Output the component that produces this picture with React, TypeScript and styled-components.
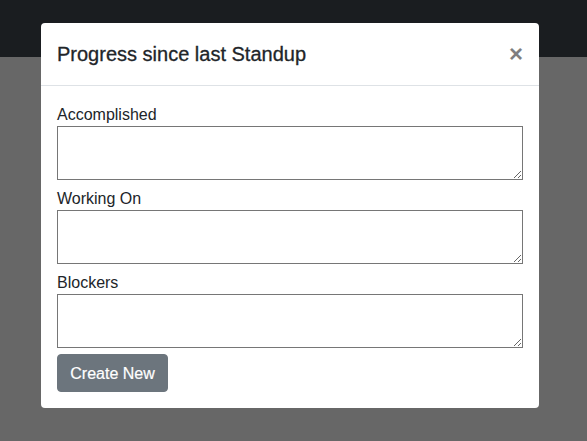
import React from 'react';
import styled, { createGlobalStyle } from 'styled-components';

const GlobalStyle = createGlobalStyle`
  html, body {
    margin: 0;
    padding: 0;
    height: 100%;
    overflow: hidden;
  }
  body {
    font-family: "Liberation Sans", Arial, sans-serif;
    color: #212529;
    background: #676767;
  }
`;

export default function App() {
  return (
    <Page>
      <GlobalStyle />
      <Navbar />
      <Backdrop />

      {/* MODAL */}
      <ModalLayer>
        <ModalContent>
          <ModalHeader>
            <ModalTitle>Progress since last Standup</ModalTitle>
            <CloseButton aria-label="Close">×</CloseButton>
          </ModalHeader>
          <ModalBody>
            <Field>
              <Label htmlFor="accomplished">Accomplished</Label>
              <TextArea id="accomplished" />
            </Field>
            <Field>
              <Label htmlFor="working">Working On</Label>
              <TextArea id="working" />
            </Field>
            <Field>
              <Label htmlFor="blockers">Blockers</Label>
              <TextArea id="blockers" />
            </Field>
            <Button>Create New</Button>
          </ModalBody>
        </ModalContent>
      </ModalLayer>
    </Page>
  );
}

const Page = styled.div`
  min-height: 100vh;
  display: flex;
  flex-direction: column;
`;

const Navbar = styled.div`
  height: 57px;
  background: #1a1d20;
`;

const Backdrop = styled.div`
  flex: 1;
  background: #676767;
`;

const ModalLayer = styled.div`
  position: fixed;
  inset: 0;
  padding: 23px 0 0 41px;
`;

const ModalContent = styled.div`
  width: 498px;
  background: #fff;
  border-radius: 4px;
  display: flex;
  flex-direction: column;
`;

const ModalHeader = styled.div`
  display: flex;
  align-items: center;
  justify-content: space-between;
  padding: 16px;
  border-bottom: 1px solid #dee2e6;
`;

const ModalTitle = styled.h5`
  margin: 0;
  font-size: 20px;
  line-height: 30px;
  font-weight: 500;
  color: #212529;
  -webkit-text-stroke: 0.3px #212529;
`;

const CloseButton = styled.button`
  border: 0;
  background: transparent;
  padding: 0;
  font-family: "Liberation Sans", Arial, sans-serif;
  font-size: 24px;
  font-weight: 700;
  line-height: 1;
  color: #000;
  opacity: 0.5;
  cursor: pointer;
`;

const ModalBody = styled.div`
  padding: 16px;
  display: flex;
  flex-direction: column;
  align-items: flex-start;
  gap: 6px;
`;

const Field = styled.div`
  width: 100%;
  display: flex;
  flex-direction: column;
`;

const Label = styled.label`
  font-size: 16px;
  line-height: 23px;
  padding-top: 1px;
  color: #212529;
`;

const TextArea = styled.textarea`
  box-sizing: border-box;
  width: 100%;
  height: 54px;
  margin: 0;
  padding: 2px;
  border: 1px solid #767676;
  border-radius: 0;
  font-family: "Liberation Mono", monospace;
  font-size: 13px;
`;

const Button = styled.button`
  font-family: "Liberation Sans", Arial, sans-serif;
  font-size: 16px;
  line-height: 24px;
  padding: 7px 12px 5px 12px;
  width: 111px;
  border: 1px solid #6c757d;
  border-radius: 4px;
  background: #6c757d;
  color: #fff;
  cursor: pointer;
  -webkit-text-stroke: 0.2px #fff;
`;
